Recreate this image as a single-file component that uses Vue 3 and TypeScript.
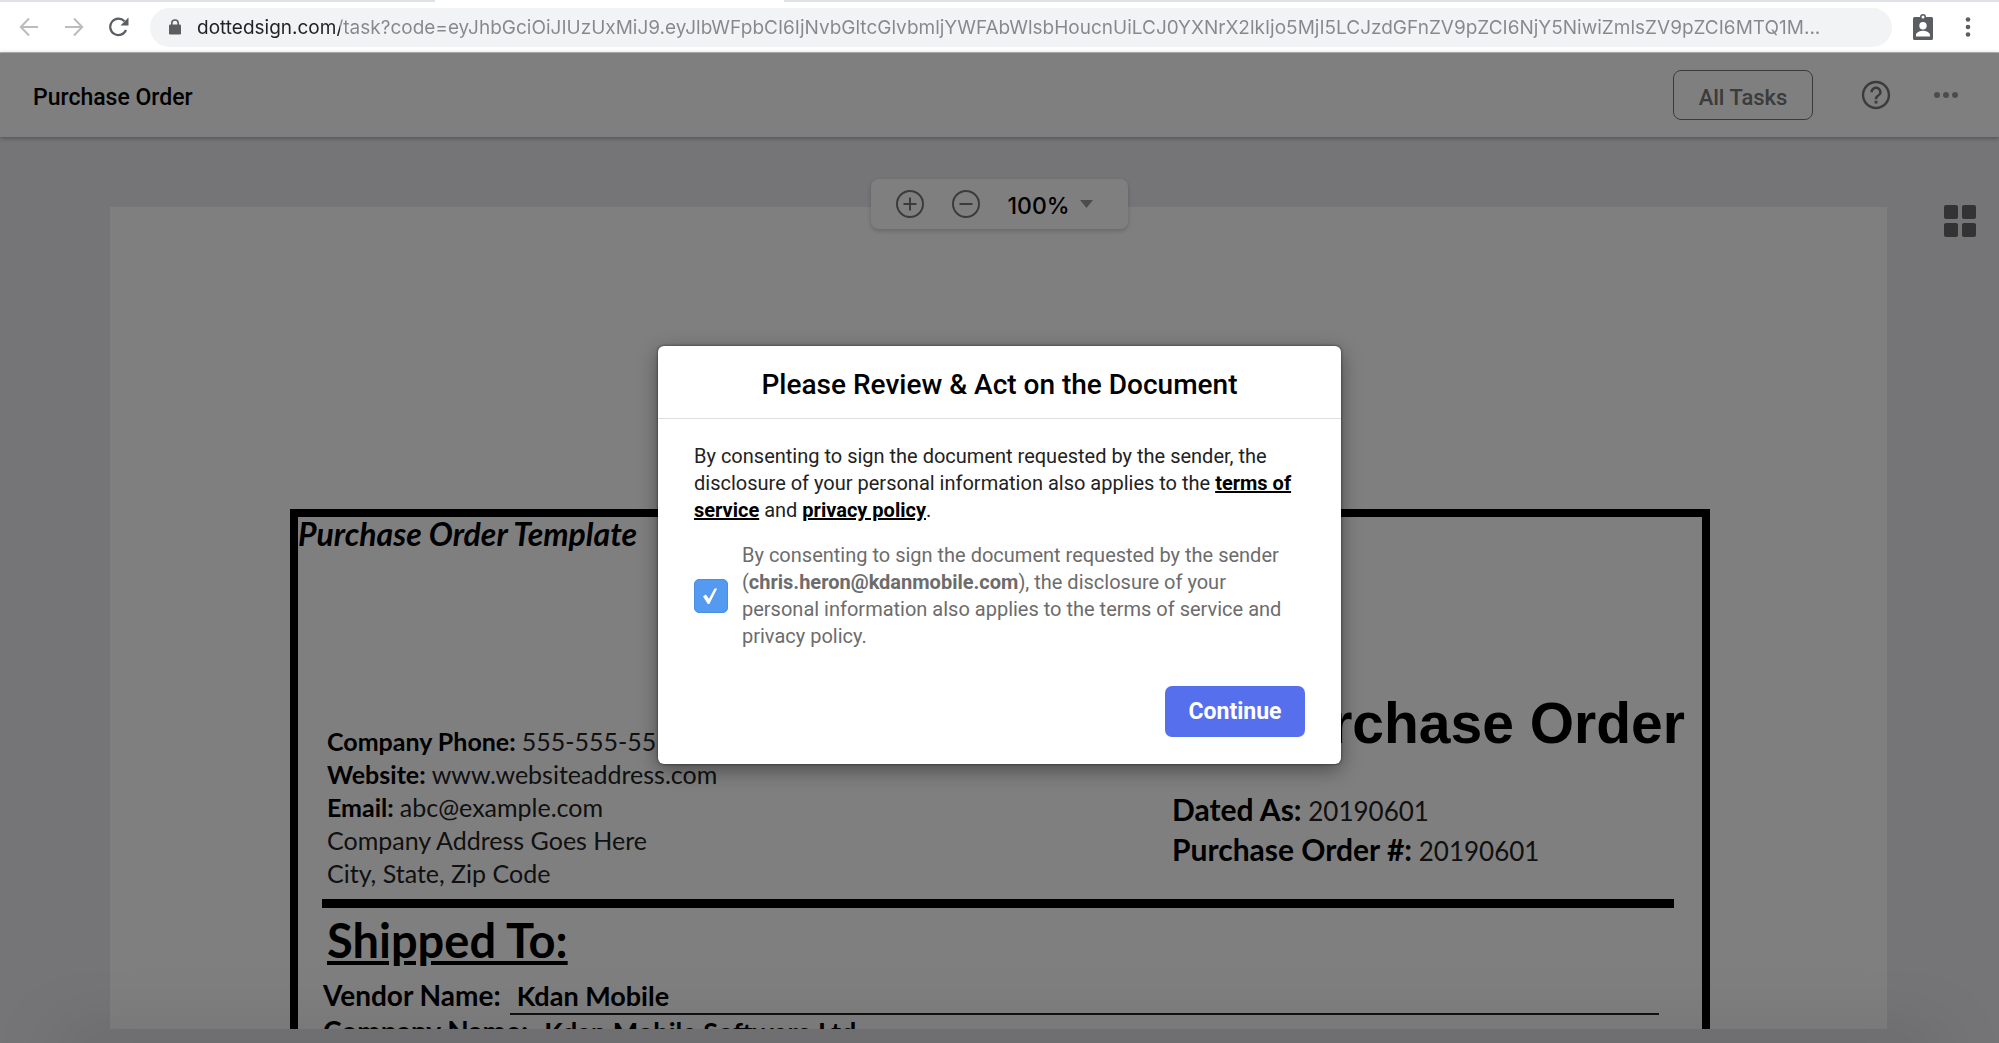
<script setup lang="ts">
import { ref } from 'vue'

const address = ref(
  'dottedsign.com/task?code=eyJhbGciOiJIUzUxMiJ9.eyJlbWFpbCI6IjNvbGltcGlvbmljYWFAbWlsbHoucnUiLCJ0YXNrX2lkIjo5MjI5LCJzdGFnZV9pZCI6NjY5NiwiZmlsZV9pZCI6MTQ1M...',
)
const zoom = ref('100%')
const agreed = ref(true)
const sender = 'chris.heron@kdanmobile.com'

interface Field {
  label?: string
  value: string
}

const company: Field[] = [
  { label: 'Company Phone:', value: '555-555-5555' },
  { label: 'Website:', value: 'www.websiteaddress.com' },
  { label: 'Email:', value: 'abc@example.com' },
  { value: 'Company Address Goes Here' },
  { value: 'City, State, Zip Code' },
]
const order: Field[] = [
  { label: 'Dated As:', value: '20190601' },
  { label: 'Purchase Order #:', value: '20190601' },
]
const shipping: Field[] = [
  { label: 'Vendor Name:', value: 'Kdan Mobile' },
  { label: 'Company Name:', value: 'Kdan Mobile Software Ltd' },
]
</script>

<template>
  <div class="screen">
    <div class="browser">
      <div class="tabs"><span class="tab-left"></span><span class="tab-right"></span></div>
      <div class="bar">
        <button class="nav" aria-label="Back">
          <svg width="20" height="20" viewBox="0 0 20 20" fill="none" stroke="#babcbe" stroke-width="2"><path d="M19 10H2M10 1.500L1.800 10l8.200 8.500" /></svg>
        </button>
        <button class="nav" aria-label="Forward">
          <svg width="20" height="20" viewBox="0 0 20 20" fill="none" stroke="#babcbe" stroke-width="2"><path d="M1 10h17M10 1.500l8.200 8.500-8.200 8.500" /></svg>
        </button>
        <button class="nav" aria-label="Reload">
          <svg width="20" height="20" viewBox="0 0 20 20"><path d="M17 13A8.200 8.200 0 1 1 15.500 4.300" fill="none" stroke="#5a5d61" stroke-width="2.200" /><path d="M19.500 0.500v8h-8z" fill="#5a5d61" /></svg>
        </button>
        <div class="pill">
          <svg width="12" height="16" viewBox="0 0 12 16"><path d="M2.800 6V4.200a3.200 3.200 0 0 1 6.400 0V6" fill="none" stroke="#5a5d61" stroke-width="1.600" /><rect y="5.500" width="12" height="10" rx="1.300" fill="#5a5d61" /></svg>
          <input v-model="address" class="address" aria-label="Address" />
        </div>
        <button class="badge" aria-label="Profile">
          <svg width="22" height="26" viewBox="0 0 22 26"><path fill="#5a5d61" fill-rule="evenodd" d="M2.500 3H8a3 3 0 0 1 6 0h5.500A1.500 1.500 0 0 1 21 4.500v20a1.500 1.500 0 0 1-1.500 1.500h-17A1.500 1.500 0 0 1 1 24.500v-20A1.500 1.500 0 0 1 2.500 3zM11 1.500A1.500 1.500 0 1 0 11 4.500 1.500 1.500 0 0 0 11 1.500zM11 8a3.700 3.700 0 1 0 0 7.400A3.700 3.700 0 0 0 11 8zM4 22.500h14v-1.500c0-2.800-4.700-4.200-7-4.200s-7 1.400-7 4.200z" /></svg>
        </button>
        <button class="kebab" aria-label="Menu">
          <svg width="6" height="20" viewBox="0 0 6 20" fill="#5a5d61"><circle cx="3" cy="2.500" r="2.300" /><circle cx="3" cy="10" r="2.300" /><circle cx="3" cy="17.500" r="2.300" /></svg>
        </button>
      </div>
    </div>

    <div class="app">
      <header class="topbar">
        <h1>Purchase Order</h1>
        <button class="tasks">All Tasks</button>
        <button class="help" aria-label="Help">
          <svg width="34" height="34" viewBox="0 0 24 24" fill="#777"><path d="M11 18h2v-2h-2v2zm1-16C6.480 2 2 6.480 2 12s4.480 10 10 10 10-4.480 10-10S17.520 2 12 2zm0 18.300c-4.600 0-8.300-3.700-8.300-8.300S7.400 3.700 12 3.700s8.300 3.700 8.300 8.300-3.700 8.300-8.300 8.300zM12 6c-2.210 0-4 1.790-4 4h1.800c0-1.200 1-2.200 2.200-2.200s2.200 1 2.200 2.200c0 2-3.100 1.750-3.100 5h1.800c0-2.250 3.100-2.500 3.100-5 0-2.210-1.790-4-4-4z" /></svg>
        </button>
        <button class="more" aria-label="More">
          <svg width="24" height="6" viewBox="0 0 24 6" fill="#999"><circle cx="3" cy="3" r="3" /><circle cx="12" cy="3" r="3" /><circle cx="21" cy="3" r="3" /></svg>
        </button>
      </header>

      <main class="workspace">
        <div class="zoom">
          <button aria-label="Zoom in">
            <svg width="28" height="28" viewBox="0 0 28 28" fill="none" stroke="#777" stroke-width="2"><circle cx="14" cy="14" r="13" /><path d="M14 7.500v13M7.500 14h13" /></svg>
          </button>
          <button aria-label="Zoom out">
            <svg width="28" height="28" viewBox="0 0 28 28" fill="none" stroke="#777" stroke-width="2"><circle cx="14" cy="14" r="13" /><path d="M7.500 14h13" /></svg>
          </button>
          <label class="level">
            <select v-model="zoom" aria-label="Zoom level"><option>100%</option></select>
            <svg width="13" height="8" viewBox="0 0 13 8"><path d="M0 0h13L6.500 8z" fill="#999" /></svg>
          </label>
        </div>

        <article class="page">
          <div class="sheet">
            <p class="template">Purchase Order Template</p>
            <div class="summary">
              <div class="company">
                <p v-for="f in company" :key="f.value"><b v-if="f.label">{{ f.label }}&nbsp;</b>{{ f.value }}</p>
              </div>
              <div class="order">
                <h2>Purchase Order</h2>
                <p v-for="f in order" :key="f.label"><b>{{ f.label }}</b> {{ f.value }}</p>
              </div>
            </div>
            <hr />
            <h3>Shipped To:</h3>
            <div v-for="f in shipping" :key="f.label" class="line">
              <b>{{ f.label }}</b>
              <span>{{ f.value }}</span>
            </div>
          </div>
        </article>
        <aside class="side">
          <button aria-label="Pages">
            <svg width="32" height="32" viewBox="0 0 32 32" fill="#666"><rect width="14" height="14" rx="2" /><rect x="18" width="14" height="14" rx="2" /><rect y="18" width="14" height="14" rx="2" /><rect x="18" y="18" width="14" height="14" rx="2" /></svg>
          </button>
        </aside>
      </main>

      <div class="overlay">
        <section class="dialog" role="dialog" aria-labelledby="dialog-title">
          <h2 id="dialog-title">Please Review &amp; Act on the Document</h2>
          <div class="content">
            <p>By consenting to sign the document requested by the sender, the disclosure of your personal information also applies to the <a href="#terms">terms of service</a> and <a href="#privacy">privacy policy</a>.</p>
            <div class="consent">
              <span class="check">
                <input id="agree" v-model="agreed" type="checkbox" />
                <svg v-if="agreed" width="34" height="34" viewBox="0 0 34 34"><path d="M9 17.500l2.800-2 3.200 4.300L20.500 9.500h2.700L15.300 25h-1.500z" fill="#fff" /></svg>
              </span>
              <label for="agree">By consenting to sign the document requested by the sender (<b>{{ sender }}</b>), the disclosure of your personal information also applies to the terms of service and privacy policy.</label>
            </div>
            <button class="continue">Continue</button>
          </div>
        </section>
      </div>
    </div>
  </div>
</template>

<style>
body {
  margin: 0;
}
</style>

<style scoped>
* {
  box-sizing: border-box;
}
h1, h2, h3, p {
  margin: 0;
}
button {
  padding: 0;
  border: 0;
  background: none;
  font: inherit;
  color: inherit;
}
svg {
  display: block;
}
.screen {
  display: flex;
  flex-direction: column;
  height: 100vh;
  overflow: hidden;
  font-family: Roboto, "Liberation Sans", sans-serif;
}
.browser {
  flex: none;
  height: 53px;
  background: #fff;
  border-bottom: 1px solid #bbb;
}
.tabs {
  display: flex;
  justify-content: space-between;
  height: 2px;
}
.tabs span {
  background: #dee1e6;
}
.tab-left {
  width: 435px;
}
.tab-right {
  width: calc(100% - 784px);
}
.bar {
  display: flex;
  align-items: center;
  height: 50px;
  padding: 0 28px 0 19px;
}
.nav {
  margin-right: 25px;
}
.nav:nth-child(3) {
  margin-right: 21px;
}
.pill {
  display: flex;
  align-items: center;
  flex: 1;
  height: 39px;
  padding: 0 30px 0 19px;
  border-radius: 20px;
  background: #f1f3f4;
}
.address {
  flex: 1;
  min-width: 0;
  margin-left: 16px;
  padding: 0;
  border: 0;
  outline: 0;
  font: 19px Inter, "Liberation Sans", sans-serif;
  color: transparent;
  background: linear-gradient(to right, #202124 143px, #85898d 143px);
  background-clip: text;
  -webkit-background-clip: text;
}
.badge {
  margin: 0 31px 0 20px;
}
.app {
  position: relative;
  display: flex;
  flex: 1;
  flex-direction: column;
  min-height: 0;
  background: #ebebf0;
}
.topbar {
  z-index: 1;
  display: flex;
  flex: none;
  align-items: center;
  height: 84px;
  padding: 0 41px 0 33px;
  background: #fff;
  box-shadow: 0 1px 5px rgba(0, 0, 0, 0.35);
}
.topbar h1 {
  flex: 1;
  padding-top: 4px;
  font-size: 23px;
  font-weight: 500;
}
.tasks {
  width: 140px;
  height: 50px;
  padding-top: 4px;
  border: 1px solid #777;
  border-radius: 8px;
  font-size: 22px;
  font-weight: 500;
  color: #777;
}
.help {
  margin: 0 41px 0 46px;
}
.workspace {
  position: relative;
  display: grid;
  flex: 1;
  grid-template-columns: minmax(0, 1fr) 112px;
  min-height: 0;
  padding: 70px 0 14px 110px;
}
.zoom {
  position: absolute;
  top: 42px;
  left: 50%;
  display: flex;
  align-items: center;
  gap: 28px;
  width: 257px;
  height: 50px;
  margin-left: -129px;
  padding-left: 25px;
  border-radius: 8px;
  background: #fff;
  box-shadow: 0 2px 5px rgba(0, 0, 0, 0.2);
}
.level {
  display: flex;
  align-items: center;
  gap: 9px;
}
.level select {
  padding: 3px 0 0;
  border: 0;
  appearance: none;
  background: none;
  font: 500 23px Inter, "Liberation Sans", sans-serif;
  color: #000;
}
.page {
  min-height: 0;
  padding: 302px 177px 0 180px;
  overflow: hidden;
  background: #fff;
}
.sheet {
  border: 8px solid #000;
  border-bottom: 0;
  font-family: Lato, Carlito, sans-serif;
  font-size: 25px;
  line-height: 33px;
  color: #222;
}
.sheet b, .template, .sheet h2, .sheet h3, .line {
  color: #000;
  font-weight: 700;
}
.template {
  font-size: 32px;
  font-style: italic;
  line-height: 34px;
}
.summary {
  display: flex;
  justify-content: space-between;
  margin-top: 140px;
  padding: 0 17px 0 29px;
}
.company {
  align-self: flex-end;
}
.order {
  width: 513px;
  padding-bottom: 21px;
  font-size: 26px;
  line-height: 40px;
}
.order b {
  font-size: 30px;
}
.order h2 {
  margin-bottom: 34px;
  font: 700 57px/64px "Liberation Sans", Arial, sans-serif;
  text-align: right;
}
.order p {
  height: 40px;
}
.sheet hr {
  height: 9px;
  margin: 9px 28px 6px 24px;
  border: 0;
  background: #000;
}
.sheet h3 {
  margin: 0 0 12px 29px;
  font-size: 47px;
  line-height: 52px;
  text-decoration: underline;
}
.line {
  display: flex;
  align-items: baseline;
  gap: 9px;
  height: 36px;
  padding: 0 43px 0 25px;
  font-size: 27px;
  line-height: 34px;
}
.line b {
  font-size: 28px;
}
.line span {
  flex: 1;
  padding-left: 7px;
  border-bottom: 2px solid #222;
}
.side {
  margin-top: -2px;
  padding: 0 23px;
}
.side button {
  float: right;
}
.overlay {
  position: absolute;
  z-index: 2;
  inset: 0;
  display: flex;
  align-items: flex-start;
  justify-content: center;
  padding-top: 293px;
  overflow: hidden;
  background: rgba(0, 0, 0, 0.5);
}
.overlay::after {
  content: "";
  position: absolute;
  right: 60px;
  bottom: -20px;
  left: 60px;
  height: 20px;
  box-shadow: 0 0 70px rgba(0, 0, 0, 0.25);
}
.dialog {
  width: 683px;
  border-radius: 6px;
  background: #fff;
  box-shadow: 0 6px 20px rgba(0, 0, 0, 0.4), 0 0 3px rgba(0, 0, 0, 0.6);
}
.dialog h2 {
  padding: 22px 0 17px;
  border-bottom: 1px solid #ddd;
  font-size: 28px;
  font-weight: 500;
  line-height: 33px;
  text-align: center;
}
.content {
  display: flex;
  flex-direction: column;
  padding: 24px 36px 27px;
  font-size: 20px;
  line-height: 27px;
  color: #222;
}
.content a {
  color: #000;
  font-weight: 700;
}
.consent {
  display: flex;
  align-items: center;
  gap: 14px;
  margin-top: 18px;
  color: #6c6c6c;
}
.consent label {
  max-width: 544px;
}
.check {
  display: grid;
  flex: none;
}
.check > * {
  grid-area: 1 / 1;
}
.check svg {
  pointer-events: none;
}
.check input {
  width: 34px;
  height: 34px;
  margin: 0;
  border: 1px solid #4a8fe0;
  border-radius: 5px;
  appearance: none;
}
.check input:checked {
  background: #539af0;
}
.continue {
  align-self: flex-end;
  width: 140px;
  height: 51px;
  margin-top: 36px;
  border-radius: 7px;
  background: #566fec;
  font-size: 23px;
  font-weight: 700;
  color: #fff;
}
</style>
